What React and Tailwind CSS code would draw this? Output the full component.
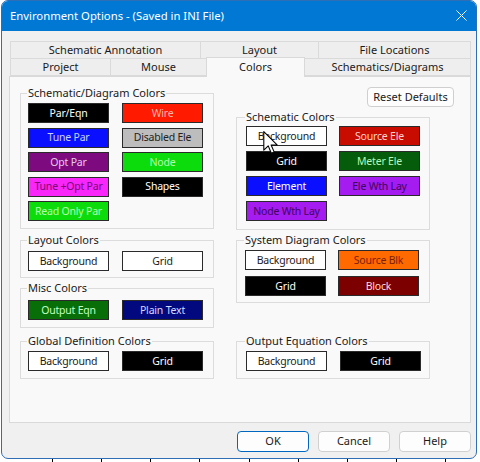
import React from 'react'

function Swatch({ label, cls }) {
  return (
    <div className={['w-[81px] h-[20px] border border-[#2a2a2a] flex items-center justify-center text-[10.5px] tracking-[-0.2px] leading-none whitespace-nowrap', cls].join(' ')}>
      {label}
    </div>
  )
}

function Group({ title, className, children }) {
  return (
    <fieldset className={['border border-[#dcdcdc] w-[194px]', className].join(' ')}>
      <legend className="px-[1px] -ml-px leading-[14px] text-[11px] text-[#1a1a1a]">{title}</legend>
      {children}
    </fieldset>
  )
}

function Tab({ label, w, active }) {
  if (active) {
    return (
      <div className={['h-[20px] relative top-[1px] z-10 bg-[#f9f9f9] border border-b-0 border-[#d9d9d9] flex items-start pt-[1px] justify-center', w].join(' ')}>
        {label}
      </div>
    )
  }
  return (
    <div className={['h-full bg-[#eeeeee] border border-[#dadada] -ml-px first:ml-0 flex items-center justify-center', w].join(' ')}>
      {label}
    </div>
  )
}

function DlgBtn({ children, primary }) {
  return (
    <button className={[
      'w-[72px] h-[21px] rounded-[4px] bg-[#fdfdfd] text-[11px] text-[#1a1a1a] flex items-center justify-center',
      primary ? 'border border-[#0067c0]' : 'border border-[#d0d0d0]',
    ].join(' ')}>
      {children}
    </button>
  )
}

const white = 'bg-white text-[#1a1a1a]'
const black = 'bg-black text-white'

export default function App() {
  return (
    <div className="w-[480px] h-[462px] bg-white overflow-hidden font-['Noto_Sans',sans-serif] text-[11px] text-[#1a1a1a]">
      <div className="ml-[1px] w-[476px] h-[459px] rounded-[7px] overflow-hidden border border-[#2f6db5] bg-[#f0f0f0] flex flex-col">
        {/* Title bar */}
        <div className="h-[30px] bg-[#0078d4] flex items-center justify-between pl-[8px] pr-[9px] shrink-0">
          <span className="text-white text-[11.3px]">Environment Options - (Saved in INI File)</span>
          <svg width="11" height="11" viewBox="0 0 11 11" className="mb-[1px]">
            <path d="M0.5 0.5L10.5 10.5M10.5 0.5L0.5 10.5" stroke="white" strokeWidth="1" />
          </svg>
        </div>

        <div className="pl-[7px] pr-[5px] pt-[10px] flex flex-col">
          {/* Tabs */}
          <div className="ml-[1px] flex h-[18px]">
            <Tab label="Schematic Annotation" w="w-[191px]" />
            <Tab label="Layout" w="w-[119px]" />
            <Tab label="File Locations" w="w-[153px]" />
          </div>
          <div className="ml-[1px] flex h-[18px] items-end -mt-px">
            <Tab label="Project" w="w-[101px]" />
            <Tab label="Mouse" w="w-[97px]" />
            <Tab label="Colors" w="w-[99px] -ml-px" active />
            <Tab label="Schematics/Diagrams" w="w-[167px]" />
          </div>

          {/* Panel */}
          <div className="h-[347px] bg-[#f9f9f9] border border-[#d9d9d9] pl-[10px] pt-[9px] flex gap-[22px]">
            {/* Left column */}
            <div className="flex flex-col">
              <Group title="Schematic/Diagram Colors" className="pl-[7px] pt-[3px] pb-[7px]">
                <div className="grid grid-cols-[81px_81px] gap-x-[13px] gap-y-[4.5px]">
                  <Swatch label="Par/Eqn" cls={black} />
                  <Swatch label="Wire" cls="bg-[#ff1a00] text-[#ffb4a8]" />
                  <Swatch label="Tune Par" cls="bg-[#0a10ff] text-[#c8d0ff]" />
                  <Swatch label="Disabled Ele" cls="bg-[#bdbdbd] text-[#222222]" />
                  <Swatch label="Opt Par" cls="bg-[#7e0a80] text-[#e8c8ea]" />
                  <Swatch label="Node" cls="bg-[#0cdc0c] text-[#b6ffb0]" />
                  <Swatch label="Tune +Opt Par" cls="bg-[#f826f8] text-[#7a0a7a]" />
                  <Swatch label="Shapes" cls={black} />
                  <Swatch label="Read Only Par" cls="bg-[#0cdc0c] text-[#b6ffb0]" />
                </div>
              </Group>
              <Group title="Layout Colors" className="mt-[4px] pl-[7px] pt-[4px] pb-[6px]">
                <div className="flex gap-[13px]">
                  <Swatch label="Background" cls={white} />
                  <Swatch label="Grid" cls={white} />
                </div>
              </Group>
              <Group title="Misc Colors" className="mt-[3px] pl-[7px] pt-[5px] pb-[7px]">
                <div className="flex gap-[13px]">
                  <Swatch label="Output Eqn" cls="bg-[#086f08] text-[#c4ffc0]" />
                  <Swatch label="Plain Text" cls="bg-[#02087e] text-[#d6d8ff]" />
                </div>
              </Group>
              <Group title="Global Definition Colors" className="mt-[6px] pl-[7px] pt-[3px] pb-[7px]">
                <div className="flex gap-[13px]">
                  <Swatch label="Background" cls={white} />
                  <Swatch label="Grid" cls={black} />
                </div>
              </Group>
            </div>

            {/* Right column */}
            <div className="w-[218px] flex flex-col">
              <div className="flex justify-end mt-[1px]">
                <button className="w-[87px] h-[20px] rounded-[4px] bg-[#fdfdfd] border border-[#cfcfcf] text-[11px] flex items-center justify-center">
                  Reset Defaults
                </button>
              </div>
              <Group title="Schematic Colors" className="relative mt-[3px] pl-[9px] pt-[2px] pb-[8px]">
                <div className="grid grid-cols-[81px_81px] gap-x-[12px] gap-y-[5px]">
                  <Swatch label="Background" cls={white} />
                  <Swatch label="Source Ele" cls="bg-[#c80c00] text-[#ffd2cc]" />
                  <Swatch label="Grid" cls={black} />
                  <Swatch label="Meter Ele" cls="bg-[#055c0a] text-[#b8f8b8]" />
                  <Swatch label="Element" cls="bg-[#0a10ff] text-white" />
                  <Swatch label="Ele Wth Lay" cls="bg-[#a41cf0] text-[#42045e]" />
                  <Swatch label="Node Wth Lay" cls="bg-[#a41cf0] text-[#42045e]" />
                </div>
                {/* mouse cursor */}
                <svg width="16" height="24" viewBox="0 0 13 20" className="absolute left-[26px] top-[7px]">
                  <path d="M0.5 0.5 L0.5 16 L4.2 12.4 L6.8 18.6 L9.2 17.6 L6.6 11.6 L11.6 11.6 Z" fill="white" stroke="black" strokeWidth="0.9" strokeLinejoin="round" />
                </svg>
              </Group>
              <Group title="System Diagram Colors" className="mt-[3px] pl-[8px] pt-[3px] pb-[6px]">
                <div className="grid grid-cols-[81px_81px] gap-x-[12px] gap-y-[6px]">
                  <Swatch label="Background" cls={white} />
                  <Swatch label="Source Blk" cls="bg-[#ff6a00] text-[#7a2000]" />
                  <Swatch label="Grid" cls={black} />
                  <Swatch label="Block" cls="bg-[#7c0000] text-[#ffd8d8]" />
                </div>
              </Group>
              <Group title="Output Equation Colors" className="mt-[31px] pl-[9px] pt-[3px] pb-[7px]">
                <div className="flex gap-[13px]">
                  <Swatch label="Background" cls={white} />
                  <Swatch label="Grid" cls={black} />
                </div>
              </Group>
            </div>
          </div>

          {/* Buttons */}
          <div className="mt-[8px] flex justify-end gap-[9px]">
            <DlgBtn primary>OK</DlgBtn>
            <DlgBtn>Cancel</DlgBtn>
            <DlgBtn>Help</DlgBtn>
          </div>
        </div>
      </div>

      {/* ruler ticks under the window */}
      <div className="pl-[52px] flex h-[3px]">
        {Array.from({ length: 9 }).map((_, i) => (
          <div key={i} className="w-[49.125px] shrink-0">
            <div className="w-px h-[3px] bg-black" />
          </div>
        ))}
      </div>
    </div>
  )
}
